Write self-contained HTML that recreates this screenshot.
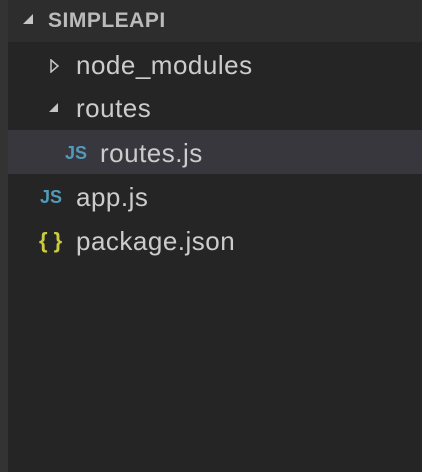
<!DOCTYPE html><html><head><style>
body{margin:0;width:422px;height:472px;background:#252526;overflow:hidden;font-family:"Liberation Sans",sans-serif;position:relative}
.strip{position:absolute;left:0;top:0;width:8px;height:472px;background:#333333}
.hdr{position:absolute;left:8px;top:0;width:414px;height:42px;background:#2d2d2d}
.t{position:absolute;color:#cccccc;font-size:26px;letter-spacing:0.5px;line-height:44px;white-space:nowrap}
.sel{position:absolute;left:8px;top:130px;width:414px;height:44px;background:#37373d}
.js{position:absolute;color:#519aba;font-weight:bold;font-size:18px;line-height:44px}
</style></head><body>
<div class="strip"></div><div class="hdr"></div>
<svg style="position:absolute;left:22px;top:13px" width="12" height="12"><polygon points="11,1 11,11 1,11" fill="#c5c5c5"/></svg>
<div class="t" style="left:48px;top:0;line-height:42px;font-size:21px;font-weight:bold;color:#bbbbbb;letter-spacing:0.5px">SIMPLEAPI</div>
<svg style="position:absolute;left:50px;top:59px" width="10" height="14"><polygon points="1,1 8,7 1,13" fill="none" stroke="#c5c5c5" stroke-width="1.5"/></svg>
<div class="t" style="left:76px;top:43px">node_modules</div>
<svg style="position:absolute;left:48px;top:102px" width="12" height="12"><polygon points="10,1 10,10 1,10" fill="#c5c5c5"/></svg>
<div class="t" style="left:76px;top:86px">routes</div>
<div class="sel"></div>
<div class="js" style="left:65px;top:131px">JS</div>
<div class="t" style="left:100px;top:131px">routes.js</div>
<div class="js" style="left:40px;top:175px">JS</div>
<div class="t" style="left:76px;top:175px">app.js</div>
<div class="t" style="left:39px;top:219px;color:#cbcb41;font-size:22px;font-weight:bold;letter-spacing:0">{ }</div>
<div class="t" style="left:76px;top:219px">package.json</div>
</body></html>
